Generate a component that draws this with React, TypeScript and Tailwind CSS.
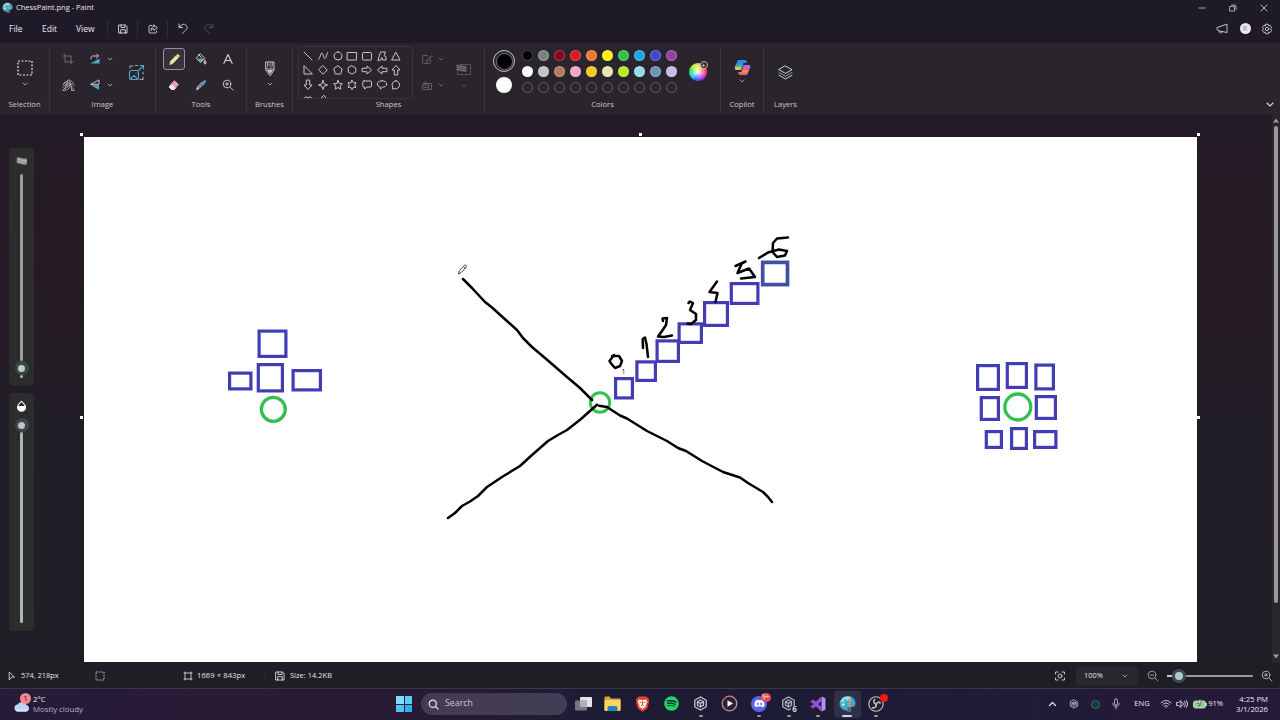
import type { ReactNode } from 'react';
import { FaSpotify, FaDiscord } from 'react-icons/fa';

const palette = [
  ['#000000', '#7f7f7f', '#88001b', '#dd1425', '#f07a2a', '#fff200', '#2fc24c', '#1aa6e8', '#3f48cc', '#983fa5'],
  ['#ffffff', '#c3c3c3', '#b47a58', '#f5a3c8', '#fcc81c', '#e9e4ad', '#b8ea22', '#94dbec', '#7092be', '#c5bce6'],
];

const shapes = [
  'M2 2 10 10',
  'M1.5 9.5C3 9.5 3.5 2.5 5 3S6.5 9 8 8.5 9.5 4 10.500 2.500',
  'M6 2a4 4 0 1 0 0 8a4 4 0 1 0 0-8z',
  'M1.5 2.5h9v7.5h-9z',
  'M2.5 2.5h7a1 1 0 0 1 1 1v5.5a1 1 0 0 1-1 1h-7a1 1 0 0 1-1-1V3.5a1 1 0 0 1 1-1z',
  'M2 10 4.5 2h5L8 5.5 10 7v3H6.5L6 7.5 4.5 10z',
  'M6 2.5 10 10H2z',
  'M2 2v8h8z',
  'M6 1.8 10.2 6 6 10.2 1.8 6z',
  'M6 2 10.2 5 8.7 10H3.3L1.8 5z',
  'M6 1.8 9.8 4v4L6 10.2 2.2 8V4z',
  'M1.5 4.3H6V2l4.500 4L6 10V7.700H1.500z',
  'M10.5 4.3H6V2L1.5 6 6 10V7.7h4.5z',
  'M4.3 10.5V6H2l4-4.5L10 6H7.7v4.5z',
  'M4.3 1.5V6H2l4 4.5L10 6H7.7V1.5z',
  'M6 1.5 7.2 4.8 10.5 6 7.2 7.2 6 10.5 4.8 7.2 1.5 6 4.8 4.8z',
  'M6 1.5 7.3 4.5 10.5 4.8 8.1 7 8.8 10.2 6 8.5 3.2 10.2 3.9 7 1.5 4.8 4.7 4.5z',
  'M6 1.3 7.3 3.7H10L8.7 6 10 8.3H7.3L6 10.7 4.7 8.3H2L3.3 6 2 3.7H4.7z',
  'M3 2h6.5a1 1 0 0 1 1 1v4a1 1 0 0 1-1 1H6L3.5 10V8H3a1.2 1.2 0 0 1-1.2-1.2V3.200A1.2 1.2 0 0 1 3 2z',
  'M6 1.8c2.7 0 4.7 1.3 4.7 3.2S8.7 8.2 6.5 8.2L4.5 10 4.3 8C2.5 7.5 1.3 6.4 1.3 5 1.3 3.1 3.3 1.8 6 1.8z',
  'M6 1.8a4 4 0 1 1-1.2 7.900L2.2 10 2.7 8A4 4 0 0 1 6 1.8z',
  'M6 10 2.2 6C1.2 4 3.5 1.8 6 3.8 8.5 1.8 10.8 4 9.8 6z',
  'M6.5 1.5 3 5.5h2L3 8l6 2.5L8 7.5 10 6z',
];

// [left, top, right, bottom] outer edges in canvas space
const boxes: [number, number, number, number][] = [
  [614, 377, 634, 399.5],
  [635.3, 360.3, 657, 382],
  [655.5, 339.3, 680, 363],
  [677.5, 322.3, 703, 344],
  [703, 301, 729, 327],
  [729.7, 282, 759.5, 305],
  [257.5, 329.5, 287.5, 358],
  [256.7, 363, 284, 392.5],
  [228, 371.5, 252.5, 390.5],
  [291.5, 369, 322, 391.5],
  [976, 364, 1000, 391],
  [1005.7, 362, 1028, 389],
  [1034.3, 363.5, 1055, 390.5],
  [979.7, 396, 1000, 421],
  [1034.7, 395, 1057, 420],
  [984.7, 430, 1003, 449],
  [1010, 427, 1028, 450],
  [1033, 430, 1057.5, 449],
];

const strokes = [
  'M463 279 472 288 485 302 492 307.5 517 330 523 338 532 347 545 358 567 377 580 388 592 400',
  'M597 404.7 581 419 567 430 558 435 548 441 532 455 520 466 502 477 487 487 478 496 470 501.5 462 506 455 513 448 518',
  'M599 405.7 607 407 620 415.5 627 418.5 647 431 667 441 678 448 686 451 702 461 723 472 740 477.5 748 483 763 492 768 497 772 502',
  'M612 356 619 356 622 361 620 366 615 368 611.5 364 609.5 361 614 355',
  'M643 348 642.7 339 645 337.5 646.5 344 648 357',
  'M663 321 662.5 318.5 667 318 666 325 662 331 658 336.5 664 337 672 335.5',
  'M688.5 303 690 301.5 693 303 690 310 696 314 696 320 691 324 687.5 323.5',
  'M717 281.5 709.5 292 717.5 293 715.5 302',
  'M745.5 261.5 735.5 266 M742 263 737.5 273 749 268.5 755 277 741 278.5',
  'M759 258 768 252.5 779 249.5 787 251 785 255.5 777 257 772.5 252 773 243 777 238.5 788 237.5',
];

function Icon({ w = 12, h = w, color = '#d6d2d8', sw = 0.9, children }: { w?: number; h?: number; color?: string; sw?: number; children: ReactNode }) {
  return (
    <svg width={w} height={h} viewBox={`0 0 ${w} ${h}`} fill="none" stroke={color} strokeWidth={sw} strokeLinecap="round" strokeLinejoin="round" className="shrink-0">
      {children}
    </svg>
  );
}

function Chevron({ color = '#a9a5ab' }: { color?: string }) {
  return (
    <Icon w={6} h={4} color={color} sw={0.9}><path d="M1 1 3 3 5 1" /></Icon>
  );
}

function SaveIcon() {
  return (
    <Icon w={10} color="#dedae0"><path d="M1 1h6.5L9 2.5V9H1zM3 1v2.5h4V1M2.700 9V5.700h4.600V9" /></Icon>
  );
}

function Group({ label, className, children }: { label: string; className: string; children: ReactNode }) {
  return (
    <div className={`flex h-[66px] shrink-0 flex-col items-center border-r border-[#39333b] ${className}`}>
      <div className="flex h-[52px] w-full items-center justify-center">{children}</div>
      <span className="text-[7.6px] leading-[13px] text-[#cbc7cd]">{label}</span>
    </div>
  );
}

function TitleBar() {
  return (
    <div className="flex h-[15px] items-center pl-[2px] text-[7.5px] text-[#ebe7ed]">
      <PaintLogo size={11} />
      <span className="ml-[3px] leading-[15px]">ChessPaint.png - Paint</span>
      <div className="ml-auto flex h-full items-center">
        <div className="flex w-[30px] justify-center"><Icon w={8} color="#bdb8c1"><path d="M1 4h6" /></Icon></div>
        <div className="flex w-[31px] justify-center"><Icon w={8} color="#bdb8c1"><path d="M1 2.5h4.5V7H1zM2.5 1H6a1 1 0 0 1 1 1v3.5" /></Icon></div>
        <div className="flex w-[32px] justify-center pr-px"><Icon w={8} color="#cdc8d1"><path d="M1 1 7 7M7 1 1 7" /></Icon></div>
      </div>
    </div>
  );
}

function MenuBar() {
  return (
    <div className="flex h-[28px] items-center text-[8.5px] text-[#ebe7ed]">
      <span className="ml-[9px] w-[33px]">File</span>
      <span className="w-[34px]">Edit</span>
      <span className="w-[31px]">View</span>
      <div className="flex h-[18px] w-[30px] items-center justify-center border-l border-[#302b38]"><SaveIcon /></div>
      <div className="flex h-[18px] w-[30px] items-center justify-center border-l border-[#302b38]">
        <Icon w={10}><path d="M4 1.5H2A1 1 0 0 0 1 2.5V8a1 1 0 0 0 1 1h5.5a1 1 0 0 0 1-1V7M6 1l3.300 2.700L6 6.300V4.800C4.500 4.800 3.500 5.500 3 6.500 3 4.300 4 2.700 6 2.500z" /></Icon>
      </div>
      <div className="flex h-[18px] w-[30px] items-center justify-center border-l border-[#302b38] pb-[2px]">
        <Icon w={10} h={11}><path d="M1 1v3.5h3.5M1.2 4.300 4 1.800C6 .5 9 1.500 9 4.500 9 6 8 7 4.500 10.200" /></Icon>
      </div>
      <div className="flex w-[24px] items-center justify-center pb-[2px]">
        <Icon w={10} h={11} color="#5c5663"><path d="M9 1v3.500H5.500M8.800 4.300 6 1.800C4 .5 1 1.500 1 4.500 1 6 2 7 5.500 10.200" /></Icon>
      </div>
      <div className="ml-auto flex items-center pb-px">
        <div className="flex w-[23px] justify-center">
          <Icon w={12}><path d="M11 1.500v8L3.500 8 1 6.500V5zM3 8c0 2.500 3 2.500 3.500.7" /></Icon>
        </div>
        <div className="flex w-[24px] justify-center">
          <span className="flex size-[11px] items-center justify-center rounded-full bg-[#ece7ee] text-[7px] leading-none text-[#8c8391]">R</span>
        </div>
        <div className="mr-[3px] flex w-[20px] justify-center">
          <Icon w={12}>
            <path d="M4.8 1.2h2.400l.5 1.600 1.500-.3L10.600 4.600 9.500 6l1.100 1.400L9.200 9.500l-1.500-.3-.5 1.600H4.800l-.5-1.600-1.500.3L1.400 7.400 2.500 6 1.400 4.600 2.800 2.500l1.500.3z" />
            <circle cx="6" cy="6" r="1.7" />
          </Icon>
        </div>
      </div>
    </div>
  );
}

function Ribbon() {
  return (
    <div className="flex h-[71px] items-start bg-[#2a252c] pt-[3px]">
      <Group label="Selection" className="w-[50px]">
        <div className="flex flex-col items-center gap-[6px] pt-[2px]">
          <Icon w={16} color="#ece8ee" sw={1.2}><rect x="1" y="1" width="14" height="14" strokeDasharray="2 1.500" strokeLinecap="butt" /></Icon>
          <Chevron />
        </div>
      </Group>

      <Group label="Image" className="w-[106px]">
        <div className="flex w-full items-center">
          <div className="grid grid-cols-[36px_18px_11px] grid-rows-[26px_26px] place-items-center">
            <Icon w={12} color="#77717a"><path d="M3 1v8h8M1 3h8v8" /></Icon>
            <Icon w={12}>
              <path d="M10.500 5.5v5h-9z" fill="#4eaccd" stroke="none" />
              <path d="M2 6V4.500C2 3.500 3 3 4 3h5M7.500 1 9.500 3 7.500 5" />
            </Icon>
            <Chevron />
            <Icon w={13} color="#b9b5bb" sw={0.8}>
              <path d="M1 6 6 1M1 8.500 4.500 5M1 11 4 8M8 1l4 4M9 4.500l3 3M9.500 8l2.500 3M3 3 1.500 4.500M6 1 4 6M7 1l2 5M12 11.500H9.500V8a3 3 0 0 0-6 0v3.500H1" />
              <circle cx="6.500" cy="5.500" r="2" />
              <path d="M5 11 8 8M4.500 9 7 6.500" />
            </Icon>
            <Icon w={12}>
              <path d="M10 1.300v4L2 5.300z" />
              <path d="M2 6.300h8v4.500z" fill="#4eaccd" stroke="none" />
            </Icon>
            <Chevron />
          </div>
          <div className="ml-[9px] flex w-[24px] justify-center">
            <Icon w={17} color="#5ca8c6" sw={1.100}>
              <path d="M2 4V2h3M7.500 1.500h2M15 8v2M15 13v2.500h-3" stroke="#9aaab2" />
              <path d="M11 6 15.500 1.500M12 1.500h3.500V5" />
              <rect x="1.500" y="6.500" width="9" height="9" rx="1.500" />
              <path d="M3 14.500 6 11.500l3 3M8 9h.1" />
            </Icon>
          </div>
        </div>
      </Group>

      <Group label="Tools" className="w-[91px]">
        <div className="grid grid-cols-[27px_27px_27px] grid-rows-[26px_26px] place-items-center">
          <div className="flex size-[22px] items-center justify-center rounded-[3px] border border-[#96919a] bg-[#37323a]">
            <Icon w={13}>
              <path d="m2 11 .8-3L9 1.800c1-.8 2.800.8 2 2L5 10.200z" fill="#efe3a4" stroke="#efe3a4" />
              <path d="M8.500 2.500 10.300 4.300" stroke="#a99c64" />
            </Icon>
          </div>
          <Icon w={12}>
            <path d="M2.500 5.500 9.500 5.500 5.500 9.200z" fill="#4eaccd" stroke="none" />
            <path d="M5.500 1 10 5.500 5.500 9.500 1.500 5.500zM3.500 1.500 6.500 4.500" />
            <path d="M10 7.500c2 2.300 1 3.500 0 3.500s-2-1.200 0-3.500z" fill="#e9a0a0" stroke="#e9a0a0" />
          </Icon>
          <Icon w={12} sw={1.100}><path d="M1.800 10.500 6 1.500 10.200 10.500M3.300 7.500h5.400" /></Icon>
          <Icon w={12}>
            <path d="M6.500 2 10.500 5.500 7 9.500 3 5.700z" fill="#f0a0ae" stroke="#f0a0ae" />
            <path d="M3 5.700 1 8l2.500 2.500h2.700L7 9.500z" fill="#f5f0f4" stroke="#f5f0f4" />
          </Icon>
          <Icon w={12}>
            <path d="M7 3.500 2.500 8 1.500 10.700 4 9.500 8.500 5z" stroke="#e4e0e6" fill="#47727f" />
            <path d="M6.500 3 9 5.500M7.500 3.700 9.200 1.800c1-.8 1.800.2 1.200 1.200L8.500 5z" fill="#4eaccd" stroke="#4eaccd" />
          </Icon>
          <Icon w={12}><path d="M8 8 11 11M3.500 5h3M5 3.500v3" /><circle cx="5" cy="5" r="3.800" /></Icon>
        </div>
      </Group>

      <Group label="Brushes" className="w-[46px]">
        <div className="flex flex-col items-center gap-[5px] pt-[2px]">
          <Icon w={12} h={17}>
            <path d="M2 2h8v8L6.500 15.500h-1L2 10zM2 9h8" />
            <path d="M3.500 2v5M5 2v4M7 2v6M8.500 2v4" stroke="#a09ba2" />
            <path d="M3 10h6l-3 4.500z" fill="#c9c5cb" stroke="none" />
          </Icon>
          <Chevron />
        </div>
      </Group>

      <Group label="Shapes" className="w-[192px]">
        <div className="flex h-full w-full items-center pl-[5px]">
          <div className="grid h-[53px] w-[115px] grid-cols-[repeat(7,14.7px)] auto-rows-[14.6px] place-items-center content-start overflow-hidden rounded-[3px] border border-[#39343c] pl-[2px] pt-[2px]">
            {shapes.map((d, i) => (
              <Icon key={i} color="#c9c5cb" sw={1}><path d={d} /></Icon>
            ))}
          </div>
          <div className="ml-[7px] grid grid-cols-[14px_14px] grid-rows-[26px_26px] place-items-center">
            <Icon w={12} color="#6a646d"><path d="M6.500 2.500h-4a1 1 0 0 0-1 1v6a1 1 0 0 0 1 1h6a1 1 0 0 0 1-1V7M5 8 10 2.500l1 1L6.500 8.500z" /></Icon>
            <Chevron color="#77717a" />
            <Icon w={12} color="#6a646d"><path d="M1.500 6 4.500 3 7.500 6M2.500 4.500h6M8.500 4.500h2v6h-9V6h6v4.500M3 8.500h3" /></Icon>
            <Chevron color="#77717a" />
          </div>
          <div className="ml-[7px] flex w-[18px] flex-col items-center gap-[8px] pt-[6px]">
            <Icon w={16} h={13} color="#5d5760">
              <path d="M4 1.500h10.500v10H1.500V8" />
              <path d="M1 2.500c3 0 5 1.500 9 1.500M1 4.500c3 0 5 1.500 9 1.500M1 6.500c3 0 5 1.500 9 1.500" strokeWidth="1.400" stroke="#77717a" />
            </Icon>
            <Chevron color="#5d5760" />
          </div>
        </div>
      </Group>

      <Group label="Colors" className="w-[236px]">
        <div className="flex w-full items-center pb-px pl-[8px]">
          <div className="flex w-[22px] flex-col items-center gap-[5px]">
            <div className="flex size-[22px] items-center justify-center rounded-full border border-[#c5c1c7]">
              <div className="size-[17px] rounded-full border border-[#77727a] bg-black" />
            </div>
            <div className="size-[16px] rounded-full bg-white" />
          </div>
          <div className="ml-[4.5px] grid grid-cols-[repeat(10,16px)] auto-rows-[16px] place-items-center">
            {palette.flat().map((color) => (
              <div key={color} className="size-[11px] rounded-full border border-white/25" style={{ backgroundColor: color }} />
            ))}
            {Array.from({ length: 10 }, (_, i) => (
              <div key={i} className="size-[11px] rounded-full border border-[#69636c]" />
            ))}
          </div>
          <div className="relative ml-[9px] mt-px size-[18px] rounded-full bg-[radial-gradient(circle,white_0%,transparent_60%),conic-gradient(#ffe14a,#ff9a3d,#ff4a4a,#f02ac8,#7a3cff,#2c6cff,#27d8e8,#3be04e,#b4ee3c,#ffe14a)]">
            <span className="absolute -right-[1px] -top-[2px] flex size-[8px] items-center justify-center rounded-full border border-[#b9b5bb] bg-[#2a252c] text-[7px] leading-none text-white">+</span>
          </div>
        </div>
      </Group>

      <Group label="Copilot" className="w-[43px]">
        <div className="flex flex-col items-center gap-[3px] pb-[2px]">
          <Icon w={17}>
            <g stroke="none">
              <path d="M5 1h6c1 0 1.300.7 1.600 1.700L13 4H9.500L7.500 11H2.500C1 11 .5 9.500 1 8l2-5C3.500 1.500 4 1 5 1z" fill="#2f8fe6" />
              <path d="M2 6.500 7.500 8l-1 3h-4C.8 11 .6 9.500 1 8z" fill="#e9c348" />
              <path d="M1.800 6h6L7.300 8H1.200z" fill="#49b88a" />
              <path d="M12 16H6c-1 0-1.300-.7-1.600-1.700L4 13h3.500l2-7h5c1.500 0 2 1.500 1.500 3l-2 5c-.5 1.500-1 2-2 2z" fill="#e8607f" />
              <path d="M10 6h4.500c1.500 0 2 1.500 1.500 3H9z" fill="#a86be0" />
              <path d="M8 11h6.500l-1 3H7.500z" fill="#f08a5c" />
            </g>
          </Icon>
          <Chevron />
        </div>
      </Group>

      <div className="flex h-[66px] w-[43px] flex-col items-center">
        <div className="flex h-[52px] items-center">
          <Icon w={15} color="#e4e0e6">
            <path d="M7.500 1 14 4.700 7.500 8.400 1 4.700z" />
            <path d="M1 7.500 7.500 11.200 14 7.500" stroke="#77b8c8" />
            <path d="M1 10.200 7.500 14 14 10.200" />
          </Icon>
        </div>
        <span className="text-[7.6px] leading-[13px] text-[#cbc7cd]">Layers</span>
      </div>
      <div className="ml-auto mr-[6px] self-end pb-[7px]">
        <Icon w={8} h={5} sw={1.100}><path d="M1 1 4 4 7 1" /></Icon>
      </div>
    </div>
  );
}

function SideSliders() {
  return (
    <div className="ml-[9px] mt-[34px] flex w-[25px] flex-col gap-[7px]">
      <div className="flex h-[238px] flex-col items-center rounded-[4px] bg-[#2c2c2c] pt-[7px]">
        <Icon w={12} color="#b0b0b0">
          <path d="M1.500 2.500c3 0 5 1.700 9 1.300v5.500c-4 .5-6-1.300-9-1.300z" fill="#8c8c8c" strokeWidth="0.500" />
          <path d="M1.500 4.500c3 0 5 1.500 9 1M1.500 6.300c3 0 5 1.500 9 1" stroke="#d8d8d8" strokeWidth="0.600" />
        </Icon>
        <div className="mt-[7px] h-[187px] w-[3px] rounded-full bg-[#9d9d9d]" />
        <div className="flex size-[14px] items-center justify-center rounded-full bg-[#3f4647]">
          <div className="size-[7px] rounded-full bg-[#b9cfd1]" />
        </div>
        <div className="h-[3px] w-[3px] rounded-full bg-[#b0b8b9]" />
      </div>
      <div className="flex h-[238px] flex-col items-center rounded-[4px] bg-[#2c2c2c] pt-[7px]">
        <Icon w={11} h={12} color="#fff" sw={1.100}>
          <path d="M5.500 1.300C3.300 3.400 1.500 5 1.500 7.200a4 4 0 0 0 8 0C9.500 5 7.700 3.400 5.500 1.300z" />
          <path d="M1.500 6.500h8a4 4 0 0 1-8 0z" fill="#fff" />
        </Icon>
        <div className="mt-[6px] flex size-[14px] items-center justify-center rounded-full bg-[#404446]">
          <div className="size-[7px] rounded-full bg-[#b3c6ca]" />
        </div>
        <div className="h-[191px] w-[3px] rounded-full bg-[#a9b7bd]" />
      </div>
    </div>
  );
}

function Canvas() {
  return (
    <div className="relative ml-[50px] mt-[23px] h-[525px] w-[1113px] bg-white">
      <span className="absolute -left-[4px] -top-[4px] size-[3px] bg-white" />
      <span className="absolute left-[555px] -top-[4px] size-[3px] bg-white" />
      <span className="absolute -right-[3px] -top-[4px] size-[3px] bg-white" />
      <span className="absolute -left-[4px] top-[279px] size-[3px] bg-white" />
      <span className="absolute -right-[3px] top-[279px] size-[3px] bg-white" />
      <svg width="1113" height="525" viewBox="84 137 1113 525" fill="none">
        <g stroke="#423db2" strokeWidth="3.2">
          {boxes.map(([l, t, r, b]) => (
            <rect key={`${l}-${t}`} x={l + 1.6} y={t + 1.6} width={r - l - 3.2} height={b - t - 3.2} />
          ))}
          <rect x="762.7" y="262.4" width="24.8" height="22.200" stroke="#3e4fa6" strokeWidth="3.700" />
        </g>
        <g stroke="#34bf50" strokeWidth="3.300">
          <circle cx="600" cy="402.500" r="9.700" strokeWidth="2.900" />
          <circle cx="273.300" cy="409.300" r="12" />
          <circle cx="1017.800" cy="407" r="13" />
        </g>
        <g stroke="#000" strokeWidth="2.500" strokeLinecap="round" strokeLinejoin="round">
          {strokes.map((d) => (
            <path key={d} d={d} />
          ))}
        </g>
        <text x="621.500" y="374" fontSize="7" fill="#222" fontFamily="Open Sans, sans-serif">1</text>
        <path d="m458.500 274 1-3.500 5-5.300c1-.8 2.600.6 1.800 1.800l-5 5.500zM463.500 266.500l2 2" stroke="#333" strokeWidth="0.900" />
      </svg>
    </div>
  );
}

function StatusBar() {
  return (
    <div className="flex h-[25px] items-center bg-[#1f1e24] pt-px text-[7.4px] font-medium text-[#e6e3e9]">
      <div className="flex w-[89px] items-center gap-[4px] pl-[7px]">
        <Icon w={10}><path d="M2.500 1.300 7.500 6.200H4.700L2.500 8.700z" /></Icon>
        <span>574, 218px</span>
      </div>
      <div className="flex h-[14px] w-[88px] items-center border-l border-[#2b2930] pl-[5px]">
        <Icon w={10}><rect x="1" y="1" width="8" height="8" strokeDasharray="1.500 1.200" strokeLinecap="butt" /></Icon>
      </div>
      <div className="flex h-[14px] w-[88px] items-center gap-[4px] border-l border-[#2b2930] pl-[5px]">
        <Icon w={10}><path d="M2 1v8M8 1v8M1 2h8M1 8h8" /></Icon>
        <span className="text-[7.6px] tracking-[0.08px]">1669 × 843px</span>
      </div>
      <div className="flex h-[14px] items-center gap-[5px] border-l border-[#2b2930] pl-[9px]">
        <SaveIcon />
        <span className="tracking-[0.06px]">Size: 14.2KB</span>
      </div>
      <div className="ml-auto flex items-center">
        <Icon w={12}><path d="M1.500 4V2H4M8 2h2.500v2M10.500 8v2H8M4 10H1.500V8" /><circle cx="6" cy="6" r="2" /></Icon>
        <div className="ml-[10px] flex h-[19px] w-[62px] items-center justify-between rounded-[3px] bg-[#29272d] pl-[8px] pr-[10px]">
          <span>100%</span>
          <Chevron />
        </div>
        <div className="ml-[9px]">
          <Icon w={12} color="#a9a5ab"><path d="M8 8 11 11M3.500 5h3" /><circle cx="5" cy="5" r="3.800" /></Icon>
        </div>
        <div className="relative ml-[8px] flex h-[14px] w-[86px] items-center">
          <div className="h-[2px] w-full rounded-full bg-[#9d999f]" />
          <div className="absolute left-0 h-[2px] w-[6px] bg-[#b9cfd1]" />
          <div className="absolute left-[5px] flex size-[14px] items-center justify-center rounded-full bg-[#45494d]">
            <div className="size-[8px] rounded-full bg-[#a9cdd0]" />
          </div>
        </div>
        <div className="ml-[8px] mr-[7px]">
          <Icon w={12} color="#a5c6cb"><path d="M8 8 11 11M3.500 5h3M5 3.500v3" /><circle cx="5" cy="5" r="3.800" /></Icon>
        </div>
      </div>
    </div>
  );
}

function PaintLogo({ size }: { size: number }) {
  return (
    <svg width={size} height={size} viewBox="0 0 16 16" className="shrink-0">
      <path d="M8 1c4.500 0 7.500 3 7.500 7 0 2-1.500 3.500-3 3.200-1.500-.3-2 .8-1.500 2C11.500 14.500 10 15 8.500 15 4 14.500 .5 12 .5 8.500S3.500 1 8 1z" fill="#37a9d4" />
      <path d="M3 3.500C5 1.500 9 .8 11.500 2.300L7 6 1 6.500z" fill="#9be0e8" />
      <circle cx="4" cy="9" r="1.300" fill="#f3f6a0" />
      <circle cx="6" cy="5" r="1.200" fill="#3cc26e" />
      <circle cx="10.500" cy="4.800" r="1.200" fill="#f2a654" />
      <path d="M8 15.500V8l1.500-3L11 8v7.500z" fill="#c89567" />
      <path d="M8 11.500h3v4H8z" fill="#1f6fa3" />
    </svg>
  );
}

function UnityCube({ color = '#c9c6d2' }: { color?: string }) {
  return (
    <Icon w={15} color={color} sw={1.300}>
      <path d="M7.500 1 13.200 4.200v6.600L7.500 14 1.800 10.800V4.200zM7.500 7.500V11M7.500 7.500 4.500 5.700M7.500 7.500 10.500 5.700M4.500 9.300V5.700L7.500 4l3 1.700v3.600L7.500 11z" />
    </Icon>
  );
}

function TaskApp({ running, active, children }: { running?: boolean; active?: boolean; children: ReactNode }) {
  return (
    <div className={`relative flex h-[27px] w-[27px] items-center justify-center rounded-[3px] pb-px ${active ? 'bg-[#332f48]' : ''}`}>
      {children}
      {running && <span className={`absolute bottom-[1px] h-[2px] rounded-full ${active ? 'w-[10px] bg-[#d3d0dc]' : 'w-[4px] bg-[#9a96a8]'}`} />}
    </div>
  );
}

function Taskbar() {
  return (
    <div className="flex h-[32px] items-center border-t border-[#3a3548] bg-[linear-gradient(90deg,#261c38,#281a35_32%,#1e1c35_46%,#1e1c35_68%,#251a38)] pb-px text-[#ece8f2]">
      <div className="flex w-[395px] items-center pl-[12px]">
        <div className="relative flex w-[18px] justify-center pt-[3px]">
          <svg width="17" height="12" viewBox="0 0 17 12">
            <path d="M4 11.500h9a3.300 3.300 0 0 0 .5-6.500A5 5 0 0 0 4.500 4.500 3.600 3.600 0 0 0 4 11.500z" fill="#bfd2f1" />
            <path d="M3 9.500h12c-.3 1.200-1 2-2 2H4c-.5 0-1-1-1-2z" fill="#e0e9fa" />
          </svg>
          <span className="absolute left-[8px] -top-[4px] flex size-[11px] items-center justify-center rounded-full bg-[#f58793] text-[8px] leading-none text-[#3a1520]">1</span>
        </div>
        <div className="ml-[3px] flex flex-col text-[7.8px] leading-[10.5px]">
          <span>2°C</span>
          <span className="text-[#b7b1c1]">Mostly cloudy</span>
        </div>
      </div>

      <div className="flex w-[26px] items-center pl-[1px]">
        <div className="grid grid-cols-2 gap-px">
          <span className="size-[7.5px] bg-[#7fdcfb]" />
          <span className="size-[7.5px] bg-[#58cbf8]" />
          <span className="size-[7.5px] bg-[#4fc3f5]" />
          <span className="size-[7.5px] bg-[#2fb0ee]" />
        </div>
      </div>
      <div className="flex h-[22px] w-[146px] items-center gap-[6px] rounded-full bg-[#423c54] pl-[7px]">
        <Icon w={11} color="#e6e2ec" sw={1.200}><circle cx="4.800" cy="4.800" r="3.600" /><path d="M7.500 7.500 10 10" /></Icon>
        <span className="text-[8.8px] text-[#c9c5d2]">Search</span>
      </div>

      <div className="ml-[3px] flex items-center gap-[2.3px]">
        <TaskApp>
          <svg width="17" height="15" viewBox="0 0 17 15">
            <rect x="5" y="1" width="12" height="10" rx="1" fill="#e4e4e8" />
            <rect x="0" y="4.500" width="12" height="10" rx="1" fill="#77757f" />
            <rect x="5" y="4.500" width="7" height="6.500" fill="#b2b1b8" />
          </svg>
        </TaskApp>
        <TaskApp>
          <svg width="17" height="15" viewBox="0 0 17 15">
            <path d="M.5 1.500A1 1 0 0 1 1.500.5h4L7 2.500h9.500V14H.5z" fill="#e0a72e" />
            <path d="M.5 4h16v10a1 1 0 0 1-1 1h-14a1 1 0 0 1-1-1z" fill="#f8d465" />
            <path d="M3.500 15v-3a2 2 0 0 1 2-2h6a2 2 0 0 1 2 2v3z" fill="#2481c2" />
          </svg>
        </TaskApp>
        <TaskApp>
          <svg width="15" height="16" viewBox="0 0 15 16">
            <path d="M4 .5h7L13 2l1.300 1.500-.6 2 .2 1.500-1.700 5.500L7.500 15.700 2.800 12.500 1.100 7l.2-1.500-.6-2L2 2z" fill="#ea4427" />
            <path d="M4 3.500 7.500 4.300 11 3.500l1.300 2.200-1.800 3.500.5 1.300-3.500 2.500L4 10.500l.5-1.300-1.800-3.500z" fill="#fff" />
            <path d="M4.500 6 6.500 6.800M10.500 6 8.500 6.800M7.500 5v4M5.800 10l1.700-1 1.700 1" stroke="#ea4427" fill="none" />
          </svg>
        </TaskApp>
        <TaskApp><FaSpotify size={15} color="#1ed760" /></TaskApp>
        <TaskApp running><UnityCube /></TaskApp>
        <TaskApp>
          <svg width="17" height="17" viewBox="0 0 17 17">
            <defs>
              <linearGradient id="ring" x1="0" y1="0" x2="1" y2="1">
                <stop stopColor="#e07a3a" />
                <stop offset="1" stopColor="#c78ae8" />
              </linearGradient>
            </defs>
            <circle cx="8.500" cy="8.500" r="7.300" fill="#262336" stroke="url(#ring)" strokeWidth="1.300" />
            <path d="M6.500 5.200 12 8.500 6.500 11.800z" fill="#fff" />
          </svg>
        </TaskApp>
        <TaskApp running>
          <span className="flex size-[16px] items-center justify-center rounded-full bg-[#5865f2]"><FaDiscord size={11} color="#fff" /></span>
          <span className="absolute left-[15px] top-[2px] flex h-[9px] w-[10px] items-center justify-center rounded-full bg-[#e5484d] text-[6.5px] leading-none text-white">9+</span>
        </TaskApp>
        <TaskApp running>
          <UnityCube color="#aeb6c2" />
          <span className="absolute bottom-[5px] right-[4px] flex size-[7px] items-center justify-center rounded-[2px] bg-[#1e1c35] text-[8px] font-bold leading-none text-[#d5d7dd]">6</span>
        </TaskApp>
        <TaskApp running>
          <svg width="16" height="16" viewBox="0 0 16 16">
            <path d="M11.500.5 15.500 2.300v11.400l-4 1.800z" fill="#b98cf0" />
            <path d="M11.500.5V5L3.500 12.500.5 11V5l3-1.500 8 7.500v4.500L.5 5.800v4.700z" fill="#8a55cf" />
            <path d="M2 6.700v2.600L3.500 8z" fill="#1e1c35" />
          </svg>
        </TaskApp>
        <TaskApp running active><PaintLogo size={17} /></TaskApp>
        <TaskApp running>
          <svg width="16" height="16" viewBox="0 0 16 16" fill="none">
            <circle cx="8" cy="8" r="7.200" fill="#242129" stroke="#c2c0c8" strokeWidth="1.100" />
            <path d="M7 3c-2.500 2-1 5 1.500 5M12.500 7.500C11 5 8 6.500 8.300 9M4 11.500c3 1.200 5-1.200 3.700-3.500" stroke="#c2c0c8" strokeWidth="1.600" />
          </svg>
          <span className="absolute right-[2px] top-[3px] size-[8px] rounded-full bg-[#f01818]" />
        </TaskApp>
      </div>

      <div className="ml-auto flex items-center pr-[12px]">
        <div className="flex w-[22px] justify-center"><Icon w={9} h={6} color="#e6e2ec" sw={1.200}><path d="M1.500 4.500 4.500 1.500 7.500 4.500" /></Icon></div>
        <div className="flex w-[21px] justify-center">
          <Icon w={10} color="#b9b4c4"><path d="M5 1 8.700 3v4L5 9 1.300 7V3zM5 5v2.500M5 5 3 4M5 5 7 4M3 6.500V4l2-1 2 1v2.500" /></Icon>
        </div>
        <div className="flex w-[22px] justify-center">
          <span className="size-[9px] rounded-full border border-[#2c7a5c] bg-[#22343b]" />
        </div>
        <div className="flex w-[20px] justify-center">
          <Icon w={10} h={12} color="#c6c1d0"><rect x="3.500" y="1" width="3" height="6" rx="1.500" /><path d="M1.800 5.500c0 4 6.400 4 6.400 0M5 8.700V11" /></Icon>
        </div>
        <span className="ml-[8px] w-[26px] text-[7.5px]">ENG</span>
        <Icon w={12} h={10} color="#e6e2ec"><path d="M1 4c3-3.300 7-3.300 10 0M2.700 5.700c2-2.200 4.600-2.200 6.600 0M4.400 7.300c1-1 2.200-1 3.200 0M6 8.600h.1" /></Icon>
        <div className="ml-[4px]">
          <Icon w={12} h={10} color="#e6e2ec"><path d="M1 3.500h1.500L5 1.500v7L2.500 6.500H1zM6.700 3.500c.8 1 .8 2 0 3M8.300 2.300c1.500 1.500 1.500 4 0 5.400M9.900 1.200c2.200 2.200 2.200 5.400 0 7.600" /></Icon>
        </div>
        <div className="ml-[5px]">
          <svg width="14" height="10" viewBox="0 0 14 10">
            <rect x=".5" y="2" width="12" height="7" rx="2" fill="#8fcf8e" stroke="#dfe9df" strokeWidth=".8" />
            <path d="M13.300 4v3" stroke="#dfe9df" />
            <path d="M6.500.5 4.800 4.500h1.700L6 7.500 8.500 3.800H7L8 .5z" fill="#fff" stroke="#251a38" strokeWidth=".5" />
          </svg>
        </div>
        <span className="ml-[1px] text-[7.6px] tracking-[-0.1px]">91%</span>
        <div className="ml-[7px] flex w-[38px] flex-col items-end text-[7.7px] leading-[10.5px]">
          <span className="whitespace-nowrap">4:25 PM</span>
          <span>3/1/2026</span>
        </div>
      </div>
    </div>
  );
}

export default function App() {
  return (
    <div className="flex h-[720px] w-[1280px] flex-col overflow-hidden bg-[#1f1a28] font-['Open_Sans','Noto_Sans',sans-serif]">
      <TitleBar />
      <MenuBar />
      <Ribbon />
      <div className="flex h-[549px] bg-[linear-gradient(180deg,#221b26,#261a23_25%,#211d26_55%,#1f1e25)]">
        <SideSliders />
        <Canvas />
        <div className="ml-auto flex w-[8px] flex-col items-center bg-[#29262c] py-[4px]">
          <Icon w={6} h={5}><path d="M0 4.500 3 .5 6 4.500z" fill="#a09ba2" stroke="none" /></Icon>
          <div className="mt-[3px] h-[477px] w-[4px] rounded-full bg-[#9b979d]" />
          <div className="mt-auto"><Icon w={6} h={5}><path d="M0 .5 3 4.500 6 .5z" fill="#a09ba2" stroke="none" /></Icon></div>
        </div>
      </div>
      <StatusBar />
      <Taskbar />
    </div>
  );
}
